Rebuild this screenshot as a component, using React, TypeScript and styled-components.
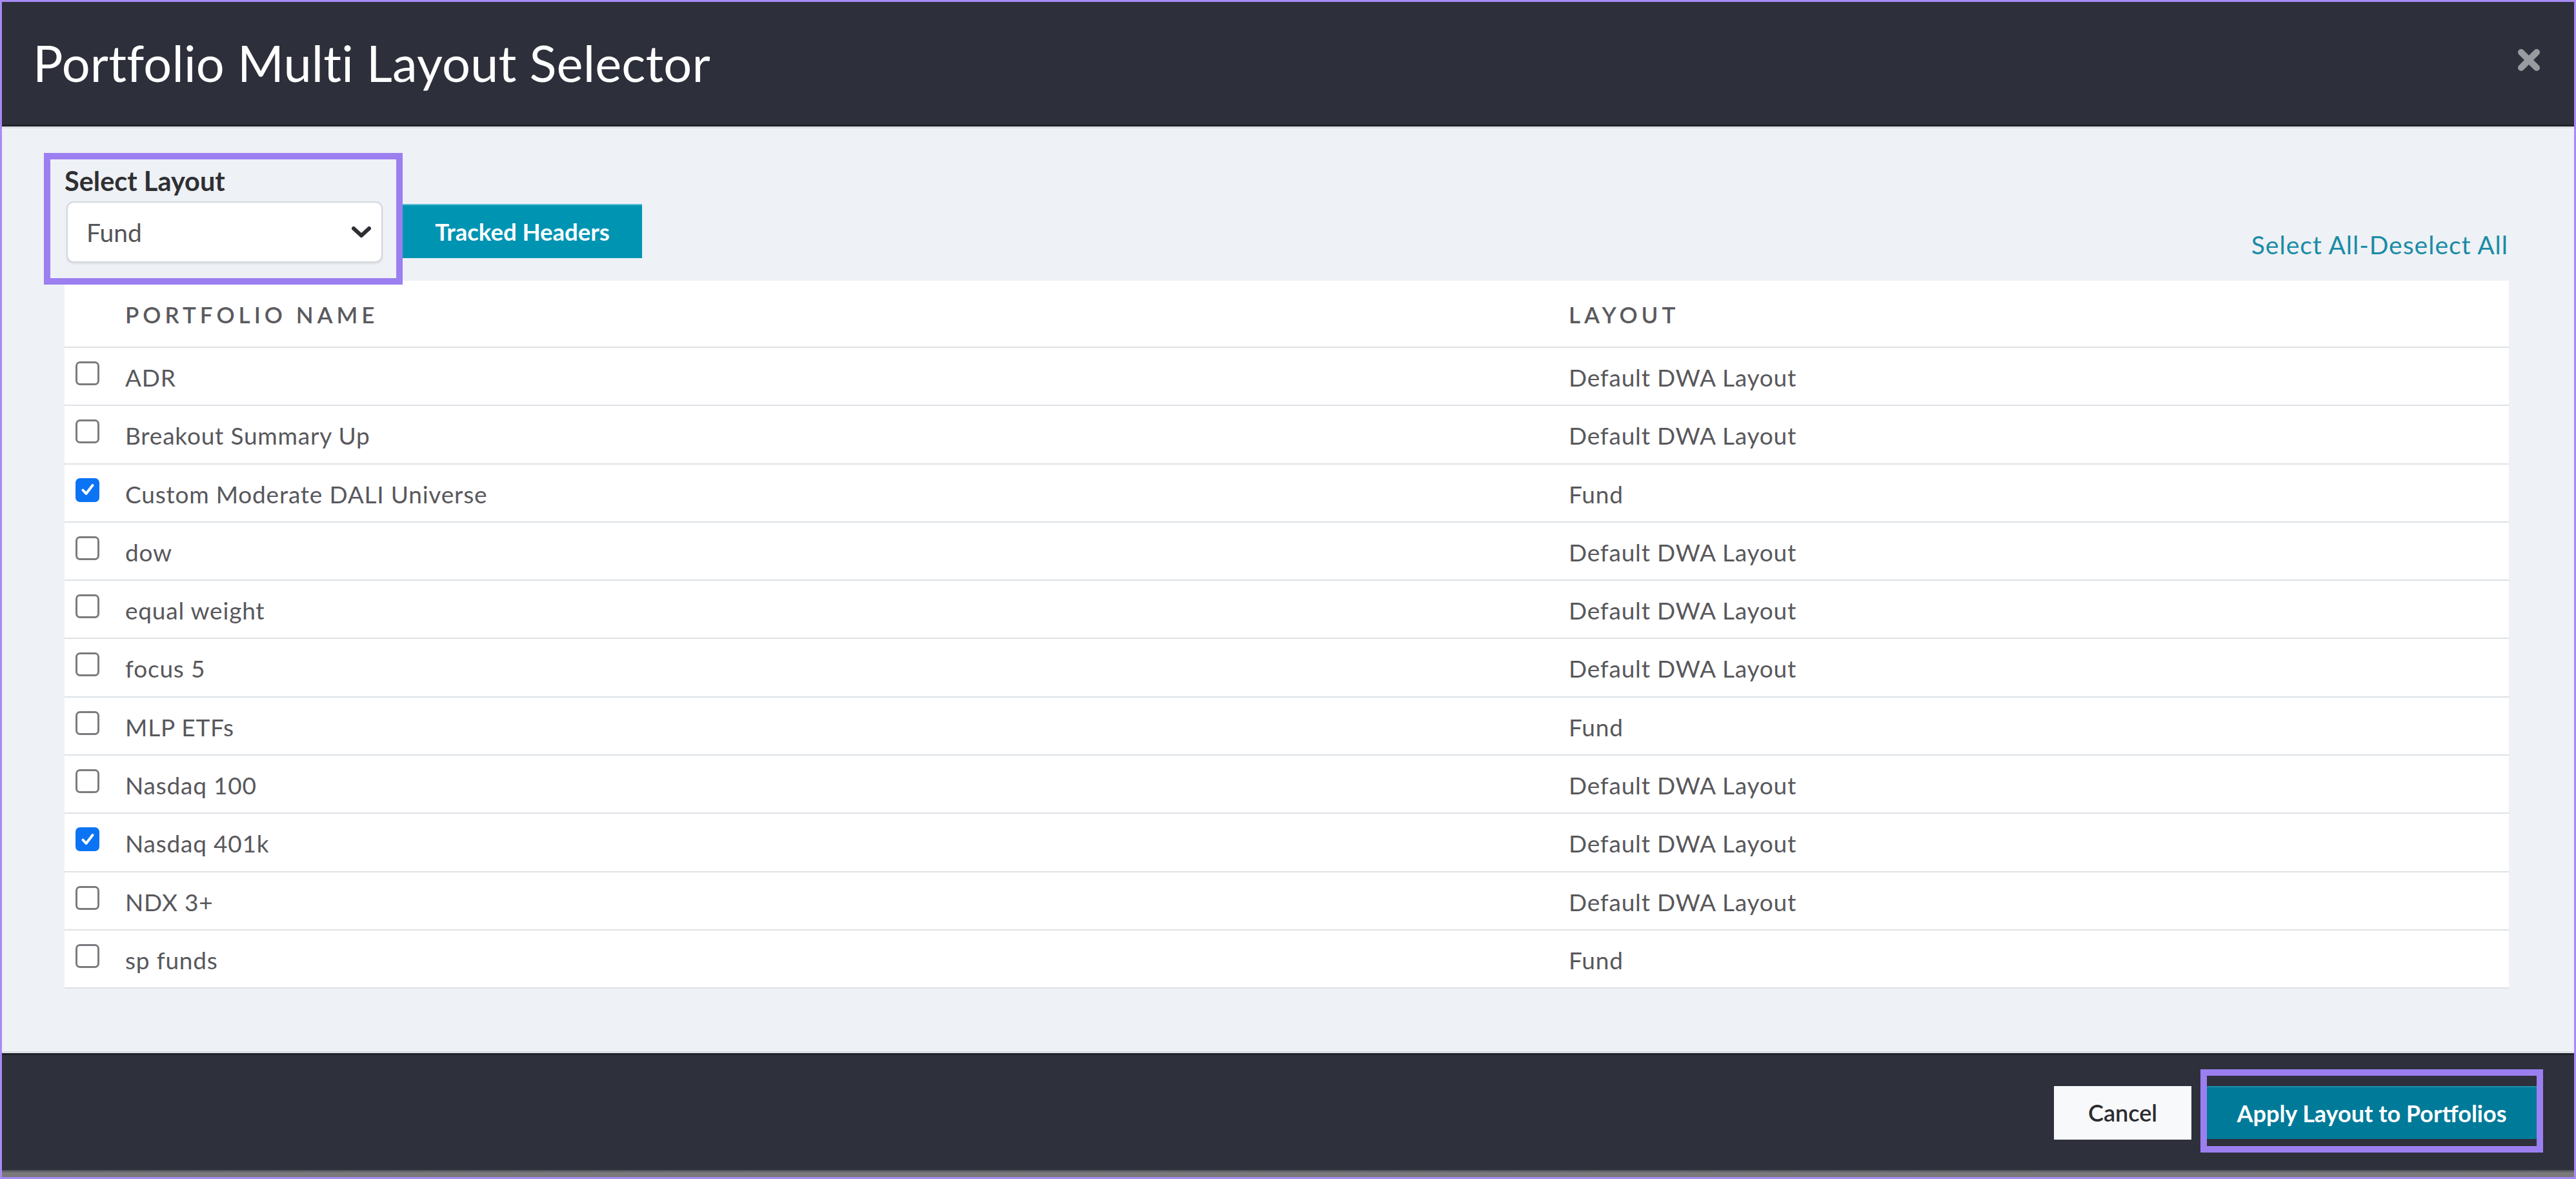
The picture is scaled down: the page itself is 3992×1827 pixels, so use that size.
import React from "react";
import styled, { createGlobalStyle } from "styled-components";

const GlobalStyle = createGlobalStyle`
  html, body {
    margin: 0;
    padding: 0;
    height: 100%;
  }
  body {
    font-family: Lato, "Open Sans", "Liberation Sans", sans-serif;
    background: #ffffff;
  }
  #root {
    height: 100%;
  }
  * { box-sizing: border-box; }
`;

const Frame = styled.div`
  height: 100vh;
  border: 3px solid #a68cf6;
  display: flex;
  flex-direction: column;
  overflow: hidden;
`;

const Header = styled.header`
  height: 193px;
  flex: 0 0 auto;
  background: #2d2f3b;
  border-bottom: 3px solid #20222b;
  display: flex;
  align-items: center;
  justify-content: space-between;
  padding: 0 48px 0 48px;
`;

const Title = styled.h1`
  margin: 0;
  color: #ffffff;
  font-family: Lato, "Open Sans", sans-serif;
  font-weight: 400;
  font-size: 77.5px;
  letter-spacing: 0.2px;
  line-height: 1;
`;

const CloseButton = styled.button`
  background: none;
  border: none;
  padding: 0;
  width: 44px;
  height: 44px;
  display: flex;
  align-items: center;
  justify-content: center;
  cursor: pointer;
  margin-top: -10px;
`;

const Body = styled.main`
  flex: 1 1 auto;
  background: #eef1f5;
  border-top: 3px solid #dfe2e6;
  padding: 57px 101px 0 97px;
  display: flex;
  flex-direction: column;
`;

const Toolbar = styled.div`
  display: flex;
  align-items: flex-end;
  justify-content: space-between;
  margin-bottom: 28px;
`;

const LeftGroup = styled.div`
  display: flex;
  align-items: flex-end;
  gap: 31px;
`;

const SelectField = styled.div`
  position: relative;
  display: flex;
  flex-direction: column;
  gap: 8px;

  &::after {
    content: "";
    position: absolute;
    top: -19px;
    bottom: -34px;
    left: -32px;
    right: -31px;
    border: 10px solid #9b7ff0;
    pointer-events: none;
  }
`;

const Label = styled.label`
  font-family: Lato, "Open Sans", sans-serif;
  font-weight: 700;
  font-size: 41.5px;
  line-height: 48px;
  color: #2f2f33;
`;

const SelectWrap = styled.div`
  position: relative;
  width: 490px;
  margin-left: 3px;
`;

const Select = styled.select`
  appearance: none;
  -webkit-appearance: none;
  width: 100%;
  height: 95px;
  padding: 0 80px 0 29px;
  font-family: Lato, "Open Sans", sans-serif;
  font-size: 39px;
  color: #555558;
  background: #ffffff;
  border: 2px solid #d3d7dc;
  border-radius: 11px;
  box-shadow: 0 2px 3px rgba(0, 0, 0, 0.08);
  outline: none;
`;

const Chevron = styled.svg`
  position: absolute;
  right: 16px;
  top: 50%;
  transform: translateY(-50%);
  pointer-events: none;
`;

const TealButton = styled.button<{ $dark?: boolean }>`
  border: none;
  background: ${(p) => (p.$dark ? "#007a99" : "#0094b3")};
  color: #ffffff;
  font-family: Lato, "Open Sans", sans-serif;
  font-weight: 700;
  font-size: 36px;
  letter-spacing: 0;
  cursor: pointer;
`;

const TrackedButton = styled(TealButton)`
  width: 371px;
  height: 84px;
  margin-bottom: 7px;
  font-size: 36.5px;
  border-top: 2px solid #5cc0d6;
`;

const SelectAllLink = styled.a`
  font-family: Lato, "Open Sans", sans-serif;
  font-size: 39px;
  letter-spacing: 1px;
  line-height: 56px;
  color: #1a8ca6;
  text-decoration: none;
  margin-right: 1px;
  cursor: pointer;
`;

const Table = styled.div`
  background: #ffffff;
  display: flex;
  flex-direction: column;
`;

const GridRow = styled.div<{ $head?: boolean }>`
  display: grid;
  grid-template-columns: 94px 2237fr 1457fr;
  align-items: ${(p) => (p.$head ? "center" : "start")};
  height: ${(p) => (p.$head ? "104px" : "90.3px")};
  padding-top: ${(p) => (p.$head ? "0" : "19px")};
  border-bottom: 2px solid #dee2e6;
`;

const HeadCell = styled.div`
  font-family: Lato, "Open Sans", sans-serif;
  font-size: 35px;
  font-weight: 600;
  letter-spacing: 6px;
  color: #5a5a5e;
  text-transform: uppercase;
  padding-top: 2px;
`;

const Cell = styled.div`
  font-family: Lato, "Open Sans", sans-serif;
  font-size: 37px;
  letter-spacing: 0.8px;
  line-height: 54px;
  color: #58585c;
  white-space: nowrap;
`;

const CheckCell = styled.label`
  display: flex;
  padding-left: 17px;
  padding-top: 2px;
  cursor: pointer;
`;

const HiddenInput = styled.input`
  position: absolute;
  opacity: 0;
  width: 0;
  height: 0;
  margin: 0;
`;

const Box = styled.span<{ $checked: boolean }>`
  width: 37px;
  height: 37px;
  border-radius: 7px;
  border: 3px solid ${(p) => (p.$checked ? "#0b74f4" : "#7b7b7f")};
  background: ${(p) => (p.$checked ? "#0b74f4" : "#ffffff")};
  display: flex;
  align-items: center;
  justify-content: center;
`;

const Footer = styled.footer`
  flex: 0 0 auto;
  height: 181px;
  background: #2e303c;
  border-top: 3px solid #20222b;
  display: flex;
  align-items: center;
  justify-content: flex-end;
  gap: 24px;
  padding-right: 58px;
  position: relative;
  box-shadow: 0 -3px 0 #dcdfe3;
`;

const CancelButton = styled.button`
  width: 213px;
  height: 83px;
  border: none;
  background: #f8f9fa;
  color: #2c2c30;
  font-family: Lato, "Open Sans", sans-serif;
  font-weight: 600;
  font-size: 36px;
  cursor: pointer;
`;

const ApplyWrap = styled.div`
  position: relative;
  display: flex;

  &::after {
    content: "";
    position: absolute;
    top: -26px;
    bottom: -21px;
    left: -10px;
    right: -10px;
    border: 10px solid #9b7ff0;
    pointer-events: none;
  }
`;

const ApplyButton = styled(TealButton)`
  width: 511px;
  height: 82px;
  border-top: 2px solid #1d8fae;
`;

const PageStrip = styled.div`
  flex: 0 0 auto;
  height: 11px;
  background: linear-gradient(#4a4b52, #7a7a7c 40%, #787879);
`;

type Row = { name: string; layout: string; checked: boolean };

const rows: Row[] = [
  { name: "ADR", layout: "Default DWA Layout", checked: false },
  { name: "Breakout Summary Up", layout: "Default DWA Layout", checked: false },
  { name: "Custom Moderate DALI Universe", layout: "Fund", checked: true },
  { name: "dow", layout: "Default DWA Layout", checked: false },
  { name: "equal weight", layout: "Default DWA Layout", checked: false },
  { name: "focus 5", layout: "Default DWA Layout", checked: false },
  { name: "MLP ETFs", layout: "Fund", checked: false },
  { name: "Nasdaq 100", layout: "Default DWA Layout", checked: false },
  { name: "Nasdaq 401k", layout: "Default DWA Layout", checked: true },
  { name: "NDX 3+", layout: "Default DWA Layout", checked: false },
  { name: "sp funds", layout: "Fund", checked: false },
];

function Checkbox({ checked }: { checked: boolean }) {
  return (
    <CheckCell>
      <HiddenInput type="checkbox" checked={checked} readOnly />
      <Box $checked={checked}>
        {checked && (
          <svg width="24" height="24" viewBox="0 0 24 24">
            <path
              d="M4.5 12.5 L9.5 18 L19.5 5"
              fill="none"
              stroke="#ffffff"
              strokeWidth="4"
              strokeLinecap="round"
              strokeLinejoin="round"
            />
          </svg>
        )}
      </Box>
    </CheckCell>
  );
}

export default function App() {
  return (
    <>
      <GlobalStyle />
      <Frame>
        <Header>
          <Title>Portfolio Multi Layout Selector</Title>
          <CloseButton aria-label="Close">
            <svg width="40" height="40" viewBox="0 0 40 40">
              <path
                d="M8 8 L32 32 M32 8 L8 32"
                stroke="#9a9ba0"
                strokeWidth="10"
                strokeLinecap="round"
              />
            </svg>
          </CloseButton>
        </Header>
        <Body>
          <Toolbar>
            <LeftGroup>
              <SelectField>
                <Label>Select Layout</Label>
                <SelectWrap>
                  <Select defaultValue="Fund">
                    <option>Fund</option>
                    <option>Default DWA Layout</option>
                  </Select>
                  <Chevron width="34" height="22" viewBox="0 0 34 22">
                    <path
                      d="M5 5 L17 16 L29 5"
                      fill="none"
                      stroke="#2f2f33"
                      strokeWidth="6"
                      strokeLinecap="round"
                      strokeLinejoin="round"
                    />
                  </Chevron>
                </SelectWrap>
              </SelectField>
              <TrackedButton>Tracked Headers</TrackedButton>
            </LeftGroup>
            <SelectAllLink>Select All-Deselect All</SelectAllLink>
          </Toolbar>
          <Table>
            <GridRow $head>
              <span />
              <HeadCell>Portfolio Name</HeadCell>
              <HeadCell>Layout</HeadCell>
            </GridRow>
            {rows.map((r) => (
              <GridRow key={r.name}>
                <Checkbox checked={r.checked} />
                <Cell>{r.name}</Cell>
                <Cell>{r.layout}</Cell>
              </GridRow>
            ))}
          </Table>
        </Body>
        <Footer>
          <CancelButton>Cancel</CancelButton>
          <ApplyWrap>
            <ApplyButton $dark>Apply Layout to Portfolios</ApplyButton>
          </ApplyWrap>
        </Footer>
        <PageStrip />
      </Frame>
    </>
  );
}
